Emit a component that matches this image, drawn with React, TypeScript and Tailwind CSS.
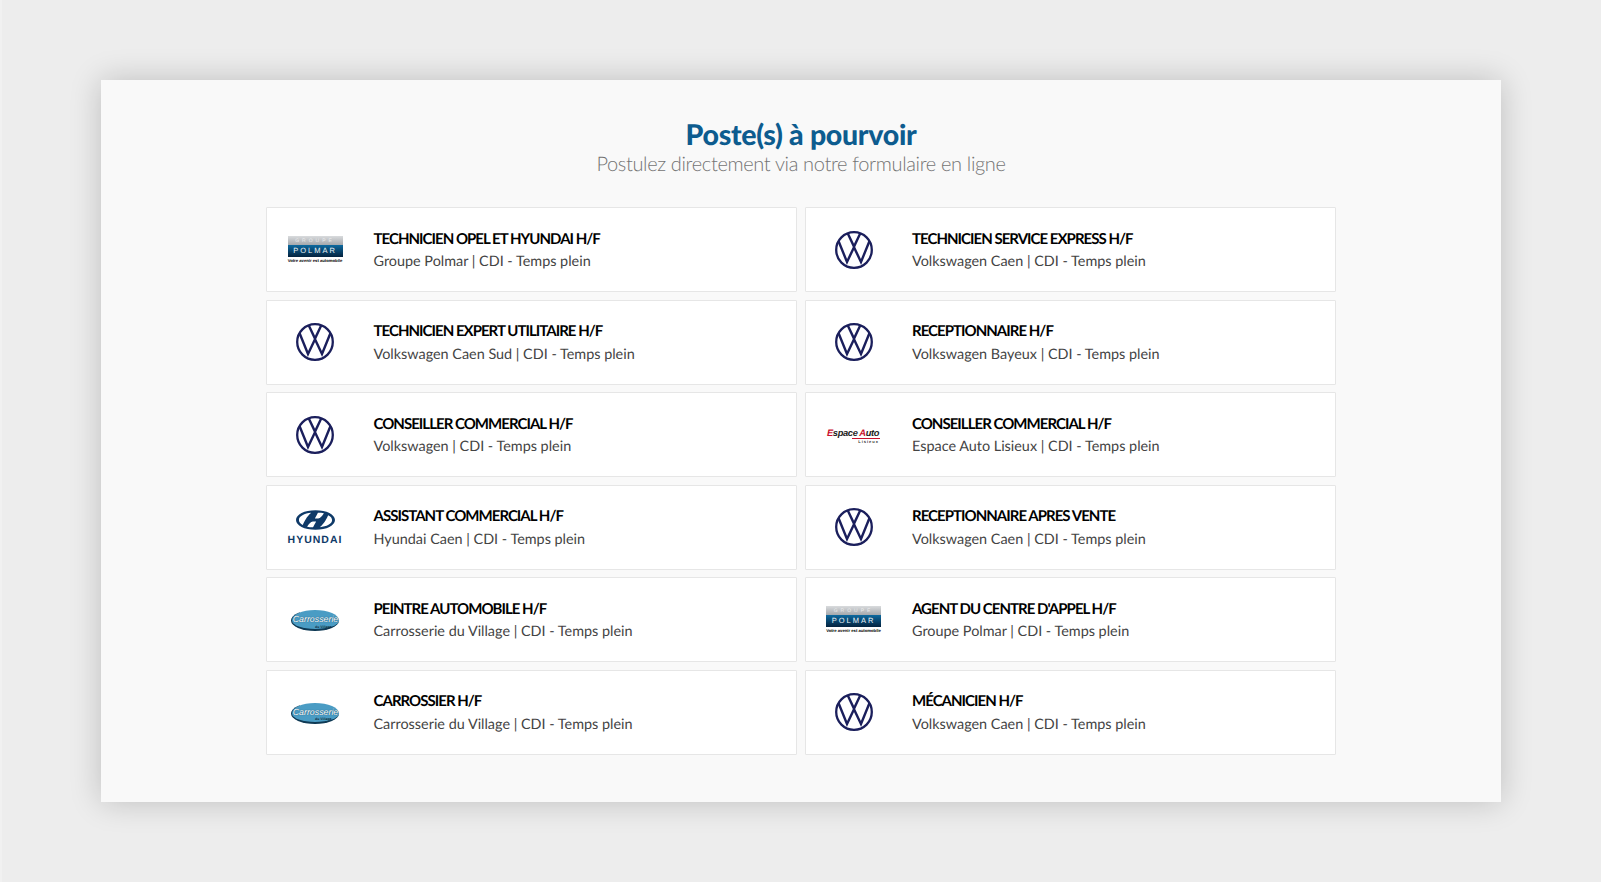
const VwLogo = () => (
    <svg width="38" height="38" viewBox="0 0 38 38" fill="none" stroke="#1b1f5c">
        <circle cx="19" cy="19" r="17.8" strokeWidth="2.3" />
        <path d="M12.8 2.4 19 15.6 25.2 2.4" strokeWidth="2.4" strokeLinejoin="miter" />
        <path d="M3.6 10.2 12 31 19 16.2 26 31 34.4 10.2" strokeWidth="2.4" strokeLinejoin="miter" />
    </svg>
);

const PolmarLogo = () => (
    <div className="w-[55px] flex flex-col items-stretch font-['Liberation_Sans',sans-serif]">
        <div className="h-[9px] bg-gradient-to-b from-[#d9dbdd] to-[#a5a9ad] flex items-end justify-center text-[5px] leading-[7px] tracking-[3px] text-white/70">
            GROUPE
        </div>
        <div className="h-[12px] bg-gradient-to-b from-[#0d6aa0] to-[#04233f] flex items-center justify-center text-[7.5px] leading-none font-normal tracking-[2px] text-[#eef3f6]">
            POLMAR
        </div>
        <div className="mt-[1px] h-[5px] text-[4.2px] leading-[5px] font-bold text-center whitespace-nowrap text-black">
            Votre avenir est automobile
        </div>
    </div>
);

const HyundaiLogo = () => (
    <div className="flex flex-col items-center">
        <svg width="39" height="20" viewBox="0 0 40 20" fill="#0f3a68">
            <path
                fillRule="evenodd"
                d="M20 0C31.4 0 40 4.3 40 10S31.4 20 20 20 0 15.7 0 10 8.6 0 20 0ZM15.6 2.6C8.6 3.3 3 6 3 10c0 2.1 1.5 3.8 4 5 1.5-3.3 3.6-8 8.6-12.4ZM11.4 16.9c1.9.4 3.9.5 6.1.5 1-1.9 2.2-4.1 3.2-5.9h-3.4c-2.4 0-4.1 2.7-5.9 5.4ZM24.4 17.4c7-.7 12.6-3.4 12.6-7.4 0-2.1-1.5-3.8-4-5-1.5 3.3-3.6 8-8.6 12.4ZM28.6 3.1c-1.9-.4-3.9-.5-6.1-.5-1 1.9-2.2 4.1-3.2 5.9h3.4c2.4 0 4.1-2.7 5.9-5.4Z"
            />
        </svg>
        <div className="mt-[6px] text-[10.5px] leading-[9px] font-bold tracking-[1px] text-[#0f3a68] font-['Liberation_Sans',sans-serif]">
            HYUNDAI
        </div>
    </div>
);

const CarrosserieLogo = () => (
    <div className="relative mt-[2px] w-[48px] h-[21px] rounded-[50%] bg-[#4a9cc4] border-b-[2px] border-l border-[#0f3a55] flex items-center justify-center">
        <span className="text-[8.8px] leading-none italic text-white font-['Liberation_Sans',sans-serif] [text-shadow:0_0_1px_#0f3a55]">
            Carrosserie
        </span>
        <span className="absolute bottom-[0px] left-[23px] text-[3.5px] leading-none font-bold text-[#0f2a3a] font-['Liberation_Sans',sans-serif]">
            du Village
        </span>
    </div>
);

const EspaceLogo = () => (
    <div className="w-[53px] mt-[2px] font-['Liberation_Sans',sans-serif]">
        <div className="text-[9.3px] leading-[10px] italic font-bold whitespace-nowrap text-[#222] tracking-[-0.35px]">
            <span className="text-[#c8102e]">E</span>space <span className="text-[#c8102e]">A</span>uto
        </div>
        <div className="ml-[25px] h-px bg-[#c8102e]" />
        <div className="text-right pr-[1px] text-[4px] leading-[5px] font-bold tracking-[1px] text-[#333]">
            Lisieux
        </div>
    </div>
);

const logos = {
    vw: <VwLogo />,
    polmar: <PolmarLogo />,
    hyundai: <HyundaiLogo />,
    carrosserie: <CarrosserieLogo />,
    espace: <EspaceLogo />,
};

type JobOffer = {
    title: string;
    company: string;
    logo: keyof typeof logos;
};

const jobs: JobOffer[] = [
    { title: "TECHNICIEN OPEL ET HYUNDAI H/F", company: "Groupe Polmar", logo: "polmar" },
    { title: "TECHNICIEN SERVICE EXPRESS H/F", company: "Volkswagen Caen", logo: "vw" },
    { title: "TECHNICIEN EXPERT UTILITAIRE H/F", company: "Volkswagen Caen Sud", logo: "vw" },
    { title: "RECEPTIONNAIRE H/F", company: "Volkswagen Bayeux", logo: "vw" },
    { title: "CONSEILLER COMMERCIAL H/F", company: "Volkswagen", logo: "vw" },
    { title: "CONSEILLER COMMERCIAL H/F", company: "Espace Auto Lisieux", logo: "espace" },
    { title: "ASSISTANT COMMERCIAL H/F", company: "Hyundai Caen", logo: "hyundai" },
    { title: "RECEPTIONNAIRE APRES VENTE", company: "Volkswagen Caen", logo: "vw" },
    { title: "PEINTRE AUTOMOBILE H/F", company: "Carrosserie du Village", logo: "carrosserie" },
    { title: "AGENT DU CENTRE D'APPEL H/F", company: "Groupe Polmar", logo: "polmar" },
    { title: "CARROSSIER H/F", company: "Carrosserie du Village", logo: "carrosserie" },
    { title: "MÉCANICIEN H/F", company: "Volkswagen Caen", logo: "vw" },
];

const App = () => {
    return (
        <div className="min-h-[882px] bg-[#ededed] border-l-2 border-[#f1f1f1] pt-[80px] font-['Lato',sans-serif] [text-rendering:geometricPrecision]">
            <div className="ml-[99px] w-[1400px] h-[722px] bg-[#f9f9f9] pt-[40px] shadow-[0_0_30px_rgba(0,0,0,0.2)]">
                <div className="text-center">
                    <h1 className="text-[28.5px] leading-[30px] font-black tracking-[-0.3px] text-[#0d5c8f]">
                        Poste(s) à pourvoir
                    </h1>
                    <p className="text-[20px] leading-[28px] font-light tracking-[-0.35px] text-[#737373]">
                        Postulez directement via notre formulaire en ligne
                    </p>
                </div>

                <div className="grid grid-cols-[530.5px_531.5px] gap-x-[8px] gap-y-[7.5px] justify-center mt-[29px]">
                    {jobs.map((job, index) => (
                        <div
                            key={index}
                            className="flex items-center h-[85px] bg-white border border-[#e6e6e6] rounded-[1px]"
                        >
                            <div className="w-[96px] mr-[10.5px] shrink-0 flex items-center justify-center">
                                {logos[job.logo]}
                            </div>
                            <div className="pt-[2px]">
                                <div className="text-[15px] leading-[22px] font-bold tracking-[-0.97px] text-black">
                                    {job.title}
                                </div>
                                <div className="text-[14.4px] leading-[23px] pt-[0.5px] text-[#444]">
                                    {job.company} | CDI - Temps plein
                                </div>
                            </div>
                        </div>
                    ))}
                </div>
            </div>
        </div>
    );
};

export default App;
